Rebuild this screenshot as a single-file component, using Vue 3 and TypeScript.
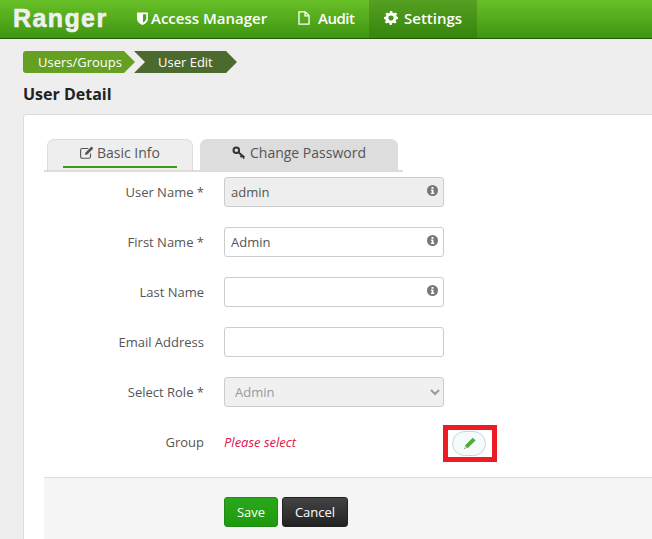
<script setup lang="ts">
interface Field { label: string; value: string; info: boolean; disabled: boolean }
const fields: Field[] = [
  { label: 'User Name *', value: 'admin', info: true, disabled: true },
  { label: 'First Name *', value: 'Admin', info: true, disabled: false },
  { label: 'Last Name', value: '', info: true, disabled: false },
  { label: 'Email Address', value: '', info: false, disabled: false },
]
</script>

<template>
  <div class="page">
    <header class="nav">
      <div class="brand">Ranger</div>
      <a class="item access">
        <svg class="ic" width="11" height="13" viewBox="0 0 11 13"><path fill="#fff" d="M0 .5h11v6c0 3.200-2.600 5.200-5.500 6.500C2.600 11.700 0 9.700 0 6.500z"/><path fill="#4f9f1c" d="M6 2.200h3.200v4.300c0 1.800-1.400 3-3.200 3.900z"/></svg>
        <span>Access Manager</span>
      </a>
      <a class="item audit">
        <svg class="ic" width="12" height="14" viewBox="0 0 12 14"><path fill="none" stroke="#fff" stroke-width="1.300" d="M1 .9h6.300L11 4.600v8.500H1zM7 1v3.900h4"/></svg>
        <span class="audit-text">Audit</span>
      </a>
      <a class="item active">
        <svg class="ic" width="14" height="14" viewBox="0 0 14 14"><path fill="#fff" fill-rule="evenodd" d="M5.800 0h2.400l.4 1.900 1.300.6 1.700-1 1.600 1.600-1.100 1.600.6 1.300L14 6.400v2.200l-1.900.4-.6 1.300 1.100 1.700-1.600 1.500-1.700-1-1.300.5-.4 2H5.800l-.4-2-1.300-.5-1.700 1-1.600-1.500 1.100-1.700L1.300 9 0 8.600V6.400L1.900 6l.6-1.300L1.400 3.100 3 1.500l1.700 1 1.300-.6zM7 4.900a2.600 2.600 0 1 0 0 5.200 2.600 2.600 0 0 0 0-5.200z" transform="scale(1 .9333)"/></svg>
        <span>Settings</span>
      </a>
    </header>

    <main class="content">
      <nav class="crumbs">
        <span class="crumb first">Users/Groups</span>
        <span class="crumb second">User Edit</span>
      </nav>
      <h1 class="title">User Detail</h1>

      <section class="card">
        <div class="tabs">
          <div class="tab basic">
            <div class="tab-label on">
              <svg width="14" height="13" viewBox="0 0 14 13"><path fill="none" stroke="#555" stroke-width="1.100" d="M10.500 7.500v3.200c0 .9-.7 1.600-1.600 1.600H2.200c-.9 0-1.600-.7-1.600-1.600V4.100c0-.9.700-1.600 1.600-1.600h6"/><path fill="#555" d="M11.500.6l1.800 1.800-6 6-2.300.5.500-2.300z"/></svg>
              <span>Basic Info</span>
            </div>
          </div>
          <div class="tab password">
            <div class="tab-label">
              <svg width="14" height="13" viewBox="0 0 14 13"><circle cx="4.300" cy="4.300" r="2.800" fill="none" stroke="#333" stroke-width="2"/><path fill="none" stroke="#333" stroke-width="2" d="M6.300 6.300l6 5M10 9.500l-1.500 1.700M12 11.200l-1 1.300"/></svg>
              <span>Change Password</span>
            </div>
          </div>
        </div>

        <form class="form" @submit.prevent>
          <div v-for="f in fields" :key="f.label" class="row">
            <label class="label">{{ f.label }}</label>
            <div class="control">
              <input class="input" :class="{ off: f.disabled }" :value="f.value" :disabled="f.disabled" />
              <svg v-if="f.info" class="info" width="11" height="11" viewBox="0 0 11 11"><circle cx="5.500" cy="5.500" r="5.500" fill="#777"/><rect x="4.500" y="2" width="2" height="1.700" fill="#fff"/><path fill="#fff" d="M3.900 4.500h2.600v3.300h.8v1.200H3.900V7.800h.8V5.700h-.8z"/></svg>
            </div>
          </div>
          <div class="row">
            <label class="label">Select Role *</label>
            <div class="control">
              <select class="input select" disabled><option>Admin</option></select>
            </div>
          </div>
          <div class="row group">
            <label class="label">Group</label>
            <em class="hint">Please select</em>
            <div class="edit-wrap">
              <button type="button" class="edit">
                <svg width="13" height="13" viewBox="0 0 13 13"><path fill="#4cae32" stroke="#2f9a3a" stroke-width=".5" d="M9.800 1l2.400 2.400-7.600 7.600-2.400-2.400z"/><path fill="#d8c27a" d="M2.200 8.600l2.400 2.400-3.500 1z"/><path fill="#1e7fa0" d="M1.100 12l1-.3-.7-.7z"/></svg>
              </button>
              <span class="mark"></span>
            </div>
          </div>
          <div class="actions">
            <button type="button" class="btn save">Save</button>
            <button type="button" class="btn cancel">Cancel</button>
          </div>
        </form>
      </section>
    </main>
  </div>
</template>

<style>
html, body { margin: 0; background: #eee; overflow: hidden; }
</style>

<style scoped>
.page {
  width: 652px;
  height: 539px;
  overflow: hidden;
  background: #eee;
  font-family: "Open Sans", sans-serif;
  font-size: 13px;
  color: #555;
}
.nav {
  height: 38px;
  display: flex;
  background: linear-gradient(#68c028, #3f9510);
  border-bottom: 1px solid #215a05;
  color: #fff;
}
.brand {
  width: 137px;
  padding-left: 13px;
  box-sizing: border-box;
  font: bold 25px/37px "Liberation Sans", sans-serif;
  letter-spacing: 1.400px;
  color: #f0f0f0;
  -webkit-text-stroke: .6px #f0f0f0;
}
.item {
  display: flex;
  align-items: center;
  font-size: 15px;
  font-weight: 600;
  padding-bottom: 2px;
  box-sizing: border-box;
}
.ic { flex: none; }
.access { width: 161px; gap: 3px; }
.audit { width: 71px; gap: 8px; }
.audit-text { letter-spacing: -.5px; }
.active {
  width: 108px;
  padding-left: 15px;
  gap: 6px;
  background: linear-gradient(#55a022, #37850d);
}
.content { padding: 12px 0 0 23px; }
.crumbs { display: flex; height: 22px; }
.crumb {
  display: flex;
  align-items: center;
  height: 22px;
  font-size: 13px;
  color: #fff;
  box-sizing: border-box;
}
.first {
  width: 112px;
  padding-left: 15px;
  background: #66a022;
  border-radius: 3px 0 0 3px;
  clip-path: polygon(0 0, 101px 0, 112px 11px, 101px 22px, 0 22px);
}
.second {
  width: 103px;
  margin-left: -1px;
  padding-left: 24px;
  background: #4c692e;
  clip-path: polygon(0 0, 92px 0, 103px 11px, 92px 22px, 0 22px, 11px 11px);
}
.title {
  margin: 10px 0 0;
  font-size: 16px;
  line-height: 22px;
  font-weight: 700;
  color: #222;
}
.card {
  margin-top: 9px;
  width: 640px;
  height: 440px;
  box-sizing: border-box;
  background: #fff;
  border: 1px solid #ddd;
  border-radius: 3px 0 0 0;
  padding: 24px 0 0 20px;
}
.tabs {
  display: flex;
  gap: 7px;
  height: 33px;
  width: 359px;
  padding-left: 3px;
  box-sizing: border-box;
  border-bottom: 2px solid #ddd;
}
.tab {
  height: 31px;
  box-sizing: border-box;
  border: 1px solid #ddd;
  border-bottom: 0;
  border-radius: 7px 7px 0 0;
  padding: 0 15px;
  font-size: 14px;
}
.basic { width: 146px; background: #eee; }
.password { width: 198px; background: #ddd; }
.tab-label {
  height: 28px;
  display: flex;
  align-items: center;
  justify-content: center;
  gap: 4px;
  box-sizing: border-box;
  border-bottom: 2px solid transparent;
  padding-bottom: 1px;
}
.basic .tab-label { gap: 3px; }
.tab-label.on { border-bottom-color: #3c9f12; }
.form { display: flex; flex-direction: column; padding-top: 5px; }
.row {
  display: flex;
  height: 30px;
  margin-bottom: 20px;
  align-items: center;
}
.label {
  width: 180px;
  padding-right: 20px;
  box-sizing: border-box;
  text-align: right;
  font-size: 13px;
  color: #555;
}
.control { position: relative; width: 220px; height: 30px; }
.input {
  width: 100%;
  height: 30px;
  box-sizing: border-box;
  border: 1px solid #ccc;
  border-radius: 3px;
  background: #fff;
  padding: 0 6px;
  font-family: inherit;
  font-size: 13px;
  color: #555;
  outline: none;
  display: block;
}
.input.off { background: #eee; }
.select { background: #f0f0f0; color: #999; padding-left: 6px; opacity: 1; }
.info { position: absolute; right: 6px; top: 8px; }
.group { height: 25px; margin-top: 4px; margin-bottom: 0; align-items: flex-start; }
.group .label, .hint { line-height: 22px; }
.hint {
  width: 228px;
  color: #e0144c;
  font-size: 13px;
  font-style: italic;
}
.edit-wrap { position: relative; }
.edit {
  display: flex;
  align-items: center;
  justify-content: center;
  width: 34px;
  height: 25px;
  padding: 0;
  border: 1px solid #c5d8dd;
  border-radius: 13px;
  background: #f5fbfd;
}
.mark {
  position: absolute;
  left: -9px;
  top: -6px;
  width: 54px;
  height: 37px;
  box-sizing: border-box;
  border: 5px solid #ed1c24;
}
.actions {
  margin-top: 21px;
  height: 62px;
  box-sizing: border-box;
  padding: 19px 0 0 180px;
  background: #f5f5f5;
  border-top: 1px solid #ddd;
  display: flex;
  gap: 4px;
  align-items: flex-start;
}
.btn {
  height: 30px;
  border-radius: 3px;
  font-family: inherit;
  font-size: 13px;
  color: #fff;
  padding: 0;
}
.save { width: 54px; background: linear-gradient(#2aa81c, #1d9a0c); border: 1px solid #1f8a14; }
.cancel { width: 66px; background: linear-gradient(#444, #222); border: 1px solid #222; }
</style>
